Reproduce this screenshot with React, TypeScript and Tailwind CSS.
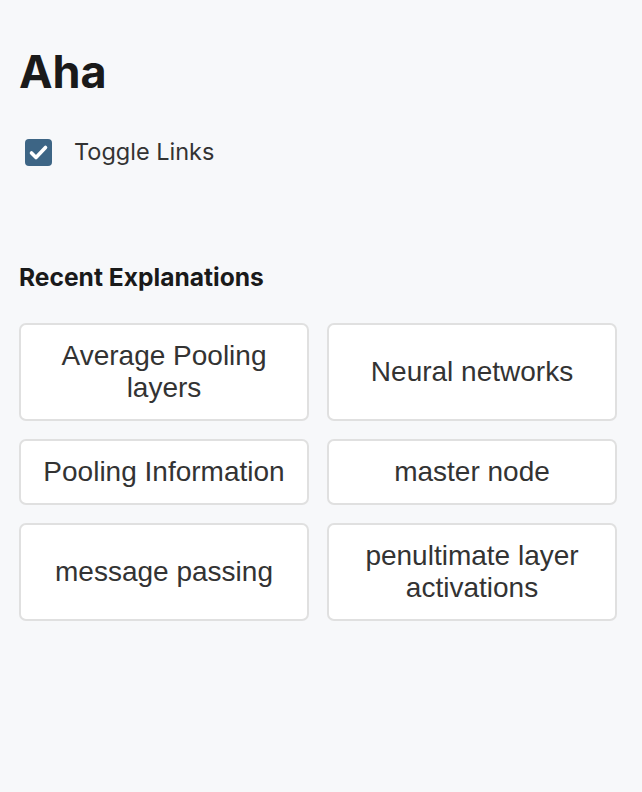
import React from "react";

const items = [
  "Average Pooling layers",
  "Neural networks",
  "Pooling Information",
  "master node",
  "message passing",
  "penultimate layer activations",
];

export default function App() {
  return (
    <div className="min-h-[792px] w-[642px] bg-[#f7f8fa] pl-[19px] pt-[44px]" style={{ fontFamily: "Inter, 'Noto Sans', sans-serif" }}>
      <h1 className="text-[45px] font-bold leading-[56px] text-[#1a1a1a]">Aha</h1>
      <label className="mt-[38px] flex items-center">
        <span className="ml-[6px] flex h-[27px] w-[27px] items-center justify-center rounded-[4px] bg-[#3d6585]">
          <svg width="27" height="27" viewBox="0 0 27 27" fill="none">
            <path d="M6.5 14 L11 18.5 L20.5 8.5" stroke="white" strokeWidth="3.6" strokeLinecap="round" strokeLinejoin="round" />
          </svg>
        </span>
        <span className="ml-[22px] text-[23.5px] leading-[28px] text-[#333]">Toggle Links</span>
      </label>
      <h2 className="mt-[97px] text-[24.6px] font-bold leading-[28px] text-[#1a1a1a]">Recent Explanations</h2>
      <div className="mt-[32px] grid w-[598px] grid-cols-2 gap-[18px]">
        {items.map((t) => (
          <div
            key={t}
            className="flex items-center justify-center rounded-[7px] border-2 border-[#e0e0e0] bg-white px-[20px] py-[15px] text-center text-[28px] leading-[32px] text-[#333]"
            style={{ fontFamily: "'Liberation Sans', Arial, sans-serif" }}
          >
            {t}
          </div>
        ))}
      </div>
    </div>
  );
}
